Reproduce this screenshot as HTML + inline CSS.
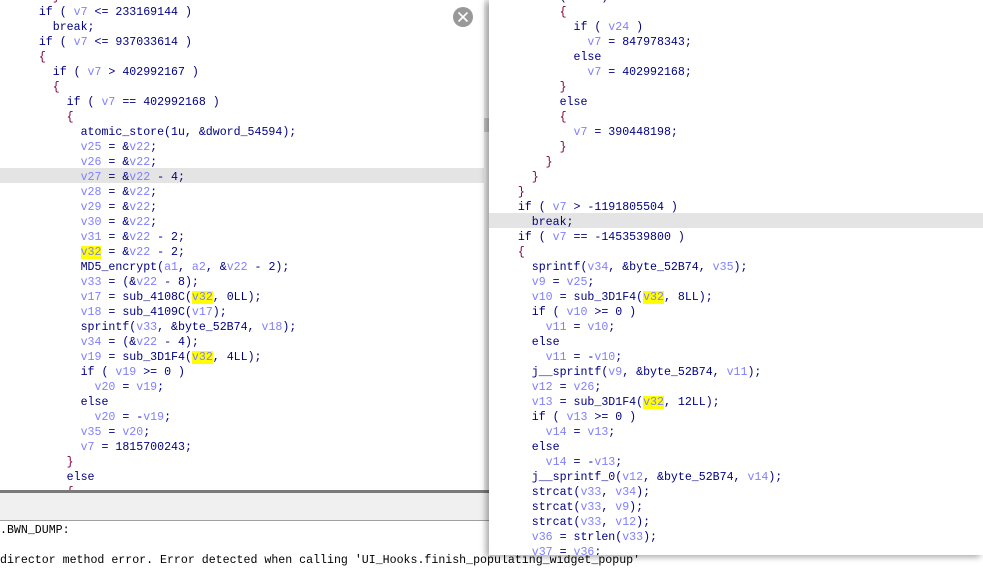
<!DOCTYPE html>
<html><head><meta charset="utf-8"><style>
html,body{margin:0;padding:0;width:983px;height:569px;overflow:hidden;background:#fff;position:relative}
pre{margin:0;font-family:"Liberation Mono",monospace;font-size:11.6px;line-height:15px;color:#000080;white-space:pre}
.v{color:#8080ff}.b{color:#800040}.y{background:#ffff00;color:#8080ff}
#left{position:absolute;left:0;top:0;width:489px;height:490px;background:#fff;overflow:hidden}
#left pre{position:absolute;left:11px;top:-10px}
#lefthl{position:absolute;left:0;top:168px;width:489px;height:15px;background:#e4e4e4}
#vs{position:absolute;left:484px;top:0;width:5px;height:490px;background:#f0f0f0}
#vs2{position:absolute;left:484px;top:118px;width:5px;height:14px;background:#c8c8c8}
#bar{position:absolute;left:0;top:490px;width:983px;height:3px;background:#7a7a7a}
#gray{position:absolute;left:0;top:493px;width:983px;height:27px;background:#f0f0f0;border-bottom:1px solid #a0a0a0}
#out{position:absolute;left:0;top:523px;font-family:"Liberation Mono",monospace;font-size:11.6px;line-height:15px;color:#000}
#close{position:absolute;left:453px;top:7px;width:20px;height:20px;border-radius:50%;background:#999}
#right{position:absolute;left:489px;top:0;width:494px;height:555px;background:#fff;overflow:hidden;box-shadow:-3px 2px 6px rgba(0,0,0,.35)}
#right pre{position:absolute;left:1px;top:-10px}
#righthl{position:absolute;left:0;top:213px;width:494px;height:15px;background:#e4e4e4}
</style></head><body>
<div id="left">
<div id="lefthl"></div>
<pre>      <span class="b">}</span>
    if ( <span class="v">v7</span> &lt;= 233169144 )
      break;
    if ( <span class="v">v7</span> &lt;= 937033614 )
    <span class="b">{</span>
      if ( <span class="v">v7</span> &gt; 402992167 )
      <span class="b">{</span>
        if ( <span class="v">v7</span> == 402992168 )
        <span class="b">{</span>
          atomic_store(1u, &amp;dword_54594);
          <span class="v">v25</span> = &amp;<span class="v">v22</span>;
          <span class="v">v26</span> = &amp;<span class="v">v22</span>;
          <span class="v">v27</span> = &amp;<span class="v">v22</span> - 4;
          <span class="v">v28</span> = &amp;<span class="v">v22</span>;
          <span class="v">v29</span> = &amp;<span class="v">v22</span>;
          <span class="v">v30</span> = &amp;<span class="v">v22</span>;
          <span class="v">v31</span> = &amp;<span class="v">v22</span> - 2;
          <span class="y">v32</span> = &amp;<span class="v">v22</span> - 2;
          MD5_encrypt(<span class="v">a1</span>, <span class="v">a2</span>, &amp;<span class="v">v22</span> - 2);
          <span class="v">v33</span> = (&amp;<span class="v">v22</span> - 8);
          <span class="v">v17</span> = sub_4108C(<span class="y">v32</span>, 0LL);
          <span class="v">v18</span> = sub_4109C(<span class="v">v17</span>);
          sprintf(<span class="v">v33</span>, &amp;byte_52B74, <span class="v">v18</span>);
          <span class="v">v34</span> = (&amp;<span class="v">v22</span> - 4);
          <span class="v">v19</span> = sub_3D1F4(<span class="y">v32</span>, 4LL);
          if ( <span class="v">v19</span> &gt;= 0 )
            <span class="v">v20</span> = <span class="v">v19</span>;
          else
            <span class="v">v20</span> = -<span class="v">v19</span>;
          <span class="v">v35</span> = <span class="v">v20</span>;
          <span class="v">v7</span> = 1815700243;
        <span class="b">}</span>
        else
        <span class="b">{</span></pre>
<div id="vs"></div><div id="vs2"></div>
<div id="close"><svg width="20" height="20" viewBox="0 0 20 20"><path d="M5.5 5.5L14.5 14.5M14.5 5.5L5.5 14.5" stroke="#fff" stroke-width="1.6"/></svg></div>
</div>
<div id="bar"></div>
<div id="gray"></div>
<div id="out">.BWN_DUMP:<br><br>director method error. Error detected when calling 'UI_Hooks.finish_populating_widget_popup'</div>
<div id="right">
<div id="righthl"></div>
<pre>          ( <span class="v">v23</span> )
          <span class="b">{</span>
            if ( <span class="v">v24</span> )
              <span class="v">v7</span> = 847978343;
            else
              <span class="v">v7</span> = 402992168;
          <span class="b">}</span>
          else
          <span class="b">{</span>
            <span class="v">v7</span> = 390448198;
          <span class="b">}</span>
        <span class="b">}</span>
      <span class="b">}</span>
    <span class="b">}</span>
    if ( <span class="v">v7</span> &gt; -1191805504 )
      break;
    if ( <span class="v">v7</span> == -1453539800 )
    <span class="b">{</span>
      sprintf(<span class="v">v34</span>, &amp;byte_52B74, <span class="v">v35</span>);
      <span class="v">v9</span> = <span class="v">v25</span>;
      <span class="v">v10</span> = sub_3D1F4(<span class="y">v32</span>, 8LL);
      if ( <span class="v">v10</span> &gt;= 0 )
        <span class="v">v11</span> = <span class="v">v10</span>;
      else
        <span class="v">v11</span> = -<span class="v">v10</span>;
      j__sprintf(<span class="v">v9</span>, &amp;byte_52B74, <span class="v">v11</span>);
      <span class="v">v12</span> = <span class="v">v26</span>;
      <span class="v">v13</span> = sub_3D1F4(<span class="y">v32</span>, 12LL);
      if ( <span class="v">v13</span> &gt;= 0 )
        <span class="v">v14</span> = <span class="v">v13</span>;
      else
        <span class="v">v14</span> = -<span class="v">v13</span>;
      j__sprintf_0(<span class="v">v12</span>, &amp;byte_52B74, <span class="v">v14</span>);
      strcat(<span class="v">v33</span>, <span class="v">v34</span>);
      strcat(<span class="v">v33</span>, <span class="v">v9</span>);
      strcat(<span class="v">v33</span>, <span class="v">v12</span>);
      <span class="v">v36</span> = strlen(<span class="v">v33</span>);
      <span class="v">v37</span> = <span class="v">v36</span>;</pre>
</div>
</body></html>
